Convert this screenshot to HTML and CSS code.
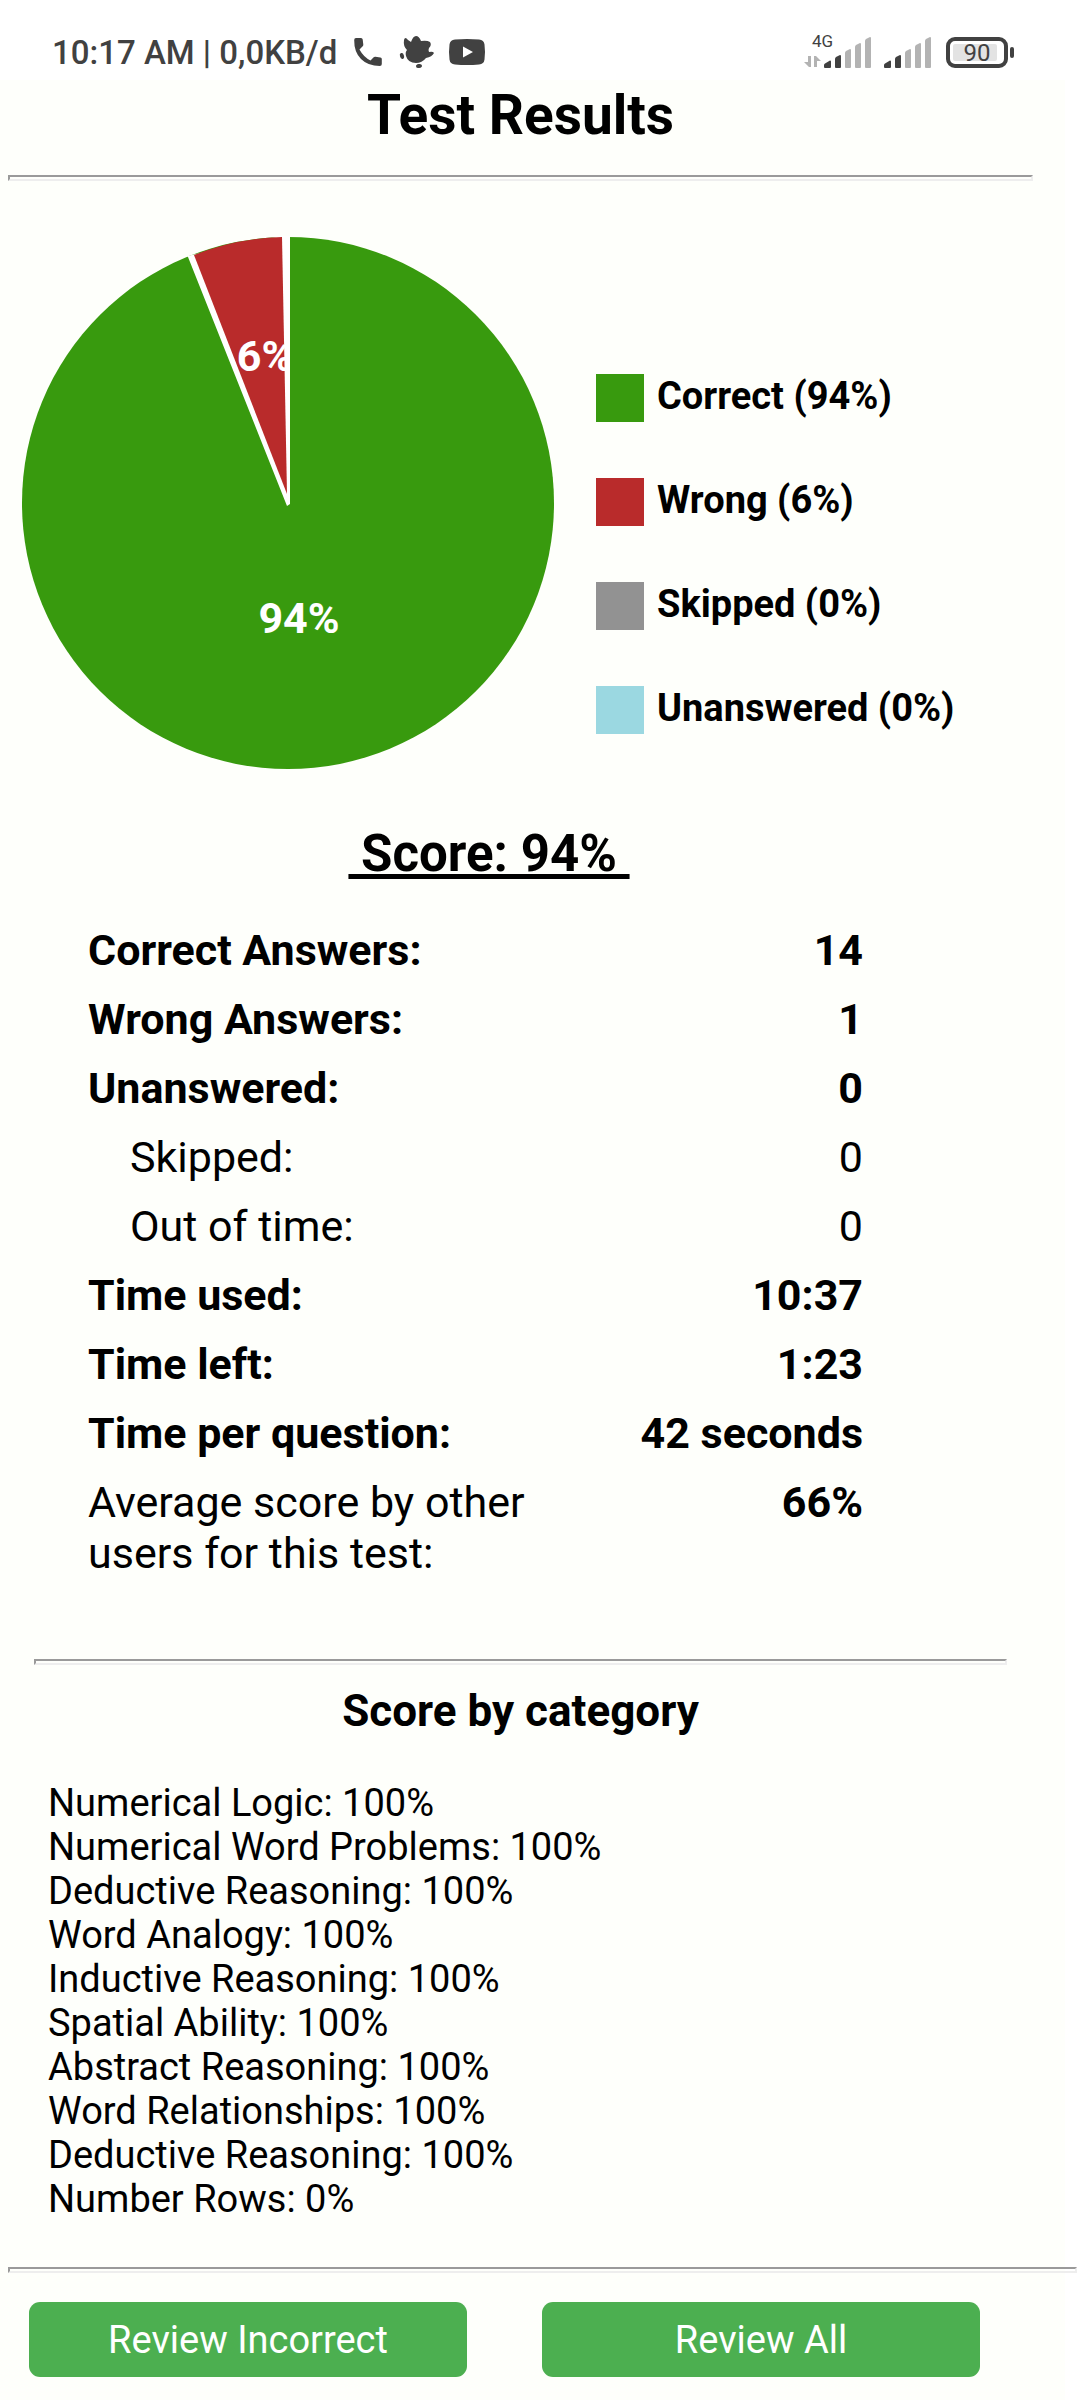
FILE: index.html
```html
<!DOCTYPE html>
<html lang="en">
<head>
<meta charset="utf-8">
<meta name="viewport" content="width=device-width, initial-scale=1">
<title>Test Results</title>
<link rel="stylesheet" href="styles.css">
</head>
<body>
<header class="status">
  <span class="status-text">10:17 AM | 0,0KB/d</span>
  <svg class="icon-phone" width="28" height="28" viewBox="0 0 28 28" aria-hidden="true"><path d="M2 0h5q1.500 0 1.700 1.500l.6 5q.1 1-.6 1.700L5.500 11.500q4 7.500 11 11l3.200-3.200q.7-.7 1.700-.5l5 .6q1.400.3 1.400 1.600v5q0 2-2 2Q14 28 7 21T.2 2Q.2 0 2 0z"/></svg>
  <svg class="icon-blob" width="34" height="34" viewBox="0 0 34 34" aria-hidden="true"><path d="M4 4q1-4 4 0l3 2q2-6 5-6t5 5q6-1 9 1 2 3-1 6-1 2 0 4 4-1 5 1-2 4-8 5-4 5-10 5-8 0-10-7-1-4 1-6-4-4-3-10z"/><ellipse cx="2" cy="20" rx="2" ry="3" transform="rotate(-15 2 20)"/><ellipse cx="19" cy="30" rx="3" ry="2" transform="rotate(-10 19 30)"/></svg>
  <svg class="icon-video" width="36" height="26" viewBox="0 0 36 26" aria-hidden="true"><path fill-rule="evenodd" d="M6 .5Q18-.5 30 .5q5 .5 5.500 5 1 7.500 0 15-.5 4.500-5.500 5-12 1-24 0-5-.5-5.500-5-1-7.500 0-15Q1 1 6 .5zM14 7.500v11l10-5.500z"/></svg>
  <svg class="icon-signal" width="68" height="35" viewBox="0 0 68 35" aria-hidden="true">
    <text x="8" y="13" class="net">4G</text>
    <path class="dim" d="M4 22h3v11H5L0 28h4zM10 33h3v-6h4l-5-5h-2z"/>
    <path d="M20 31q0-1 1-1.500l5-3q1 0 1 1V33q0 1-1 1h-5q-1 0-1-1z"/>
    <path d="M31 25q0-1 1-2l4-2q1 0 1 1v11q0 1-1 1h-4q-1 0-1-1z"/>
    <path class="dim" d="M41 19q0-1 1-2l4-2q1 0 1 1v17q0 1-1 1h-4q-1 0-1-1zM51 13q0-1 1-2l4-2q1 0 1 1v23q0 1-1 1h-4q-1 0-1-1zM61 7q0-1 1-2l4-2q1 0 1 1v29q0 1-1 1h-4q-1 0-1-1z"/>
  </svg>
  <svg class="icon-signal" width="48" height="35" viewBox="20 0 48 35" aria-hidden="true">
    <path d="M20 31q0-1 1-1.500l5-3q1 0 1 1V33q0 1-1 1h-5q-1 0-1-1z"/>
    <path d="M31 25q0-1 1-2l4-2q1 0 1 1v11q0 1-1 1h-4q-1 0-1-1z"/>
    <path class="dim" d="M41 19q0-1 1-2l4-2q1 0 1 1v17q0 1-1 1h-4q-1 0-1-1zM51 13q0-1 1-2l4-2q1 0 1 1v23q0 1-1 1h-4q-1 0-1-1zM61 7q0-1 1-2l4-2q1 0 1 1v29q0 1-1 1h-4q-1 0-1-1z"/>
  </svg>
  <svg class="icon-battery" width="68" height="31" viewBox="0 0 68 31" role="img" aria-label="Battery 90%">
    <rect x="2" y="2" width="58" height="27" rx="7" fill="none" stroke="#414141" stroke-width="4"/>
    <rect x="7" y="7" width="44" height="17" rx="2" fill="#e3e3e3"/>
    <rect x="64" y="10" width="4" height="11" rx="2"/>
    <text x="31" y="24" text-anchor="middle" class="level">90</text>
  </svg>
</header>
<main class="page">
  <h1>Test Results</h1>
  <hr>
  <section class="chart">
    <svg class="pie" viewBox="0 0 534 534" role="img" aria-label="Correct 94%, wrong 6%">
      <circle cx="267" cy="267" r="266" fill="#389a0e"/>
      <path d="M269 268L269 0L260 0L166 20L167 21L266 270z" fill="#fff"/>
      <path d="M266 258L173 19Q215 2 261 1z" fill="#b92b2b"/>
      <text x="244" y="135" text-anchor="middle">6%</text>
      <path d="M269 90h24v60h-24z" fill="#389a0e"/>
      <text x="278" y="397" text-anchor="middle">94%</text>
    </svg>
    <ul class="legend">
      <li><span class="swatch correct"></span>Correct (94%)</li>
      <li><span class="swatch wrong"></span>Wrong (6%)</li>
      <li><span class="swatch skipped"></span>Skipped (0%)</li>
      <li><span class="swatch unanswered"></span>Unanswered (0%)</li>
    </ul>
  </section>
  <h2 class="score">&nbsp;Score: 94%&nbsp;</h2>
  <table class="stats">
    <tr><th scope="row">Correct Answers:</th><td>14</td></tr>
    <tr><th scope="row">Wrong Answers:</th><td>1</td></tr>
    <tr><th scope="row">Unanswered:</th><td>0</td></tr>
    <tr class="sub"><th scope="row">Skipped:</th><td>0</td></tr>
    <tr class="sub"><th scope="row">Out of time:</th><td>0</td></tr>
    <tr><th scope="row">Time used:</th><td>10:37</td></tr>
    <tr><th scope="row">Time left:</th><td>1:23</td></tr>
    <tr><th scope="row">Time per question:</th><td>42 seconds</td></tr>
    <tr class="average"><th scope="row">Average score by other users for this test:</th><td>66%</td></tr>
  </table>
  <section class="categories">
    <hr>
    <h3>Score by category</h3>
    <ul>
      <li>Numerical Logic: 100%</li>
      <li>Numerical Word Problems: 100%</li>
      <li>Deductive Reasoning: 100%</li>
      <li>Word Analogy: 100%</li>
      <li>Inductive Reasoning: 100%</li>
      <li>Spatial Ability: 100%</li>
      <li>Abstract Reasoning: 100%</li>
      <li>Word Relationships: 100%</li>
      <li>Deductive Reasoning: 100%</li>
      <li>Number Rows: 0%</li>
    </ul>
  </section>
</main>
<footer class="actions">
  <hr>
  <div class="buttons">
    <button type="button">Review Incorrect</button>
    <button type="button">Review All</button>
  </div>
</footer>
</body>
</html>
```

FILE: styles.css
```css
* { box-sizing: border-box; }

body {
  margin: 0;
  background: #fff;
  color: #000;
  font-family: Roboto, "Liberation Sans", sans-serif;
}

h1, h2, h3, ul { margin: 0; padding: 0; }
ul { list-style: none; }

hr {
  margin: 0;
  height: 6px;
  border: 2px solid;
  border-color: #9a9a9a #eee #eee #9a9a9a;
}

.status {
  display: flex;
  align-items: flex-start;
  height: 80px;
  padding: 34px 66px 0 52px;
  color: #414141;
  fill: #414141;
}
.status-text {
  font-size: 33px;
  font-weight: 500;
  line-height: 38px;
}
.status svg { flex: none; overflow: visible; }
.icon-phone { margin: 4px 0 0 17px; }
.icon-blob { margin: 2px 0 0 18px; }
.icon-video { margin: 5px auto 0 15px; }
.icon-signal { margin-right: 12px; }
.icon-battery { margin: 3px 0 0 2px; }
.dim { fill: #b3b3b3; }
.net { font-size: 17px; }
.level { font-size: 24px; }

.page, .actions {
  margin-right: 15px;
  background: #fefffb;
}
.page { padding: 0 32px 0 8px; }

h1 {
  padding: 3px 0 28px;
  font-size: 55px;
  line-height: 64px;
  text-align: center;
}

.chart {
  display: flex;
  align-items: flex-start;
  padding-top: 55px;
}
.pie {
  flex: none;
  width: 53%;
  max-width: 534px;
  margin-left: 13px;
}
.pie text {
  fill: #fff;
  font-size: 43px;
  font-weight: 700;
}
.legend {
  display: grid;
  gap: 56px;
  padding: 138px 0 0 41px;
  font-size: 38px;
  font-weight: 700;
  line-height: 44px;
}
.legend li { display: flex; gap: 13px; }
.swatch { width: 48px; height: 48px; }
.correct { background: #389a0e; }
.wrong { background: #b92b2b; }
.skipped { background: #929292; }
.unanswered { background: #9bd8e1; }

.score {
  margin: 54px 63px 0 0;
  font-size: 51px;
  line-height: 60px;
  text-align: center;
  text-decoration: underline;
}

.stats {
  width: calc(100% - 250px);
  margin: 32px 0 0 80px;
  border-spacing: 0;
  font-size: 43px;
  line-height: 51px;
}
.stats th, .stats td { padding: 9px 0; vertical-align: top; }
.stats th { width: 60%; text-align: left; }
.stats td { font-weight: 700; text-align: right; }
.stats .sub th, .stats .sub td, .stats .average th { font-weight: 400; }
.stats .sub th { padding-left: 42px; }

.categories { padding: 71px 26px 0; }
h3 {
  padding: 18px 0 22px;
  font-size: 44px;
  line-height: 56px;
  text-align: center;
}
.categories ul {
  padding: 20px 14px 0;
  font-size: 38px;
  line-height: 44px;
}

.actions { padding: 46px 0 23px 8px; }
.actions hr { margin-right: -12px; }
.buttons {
  display: grid;
  grid-template-columns: 1fr 1fr;
  gap: 75px;
  padding: 29px 85px 0 21px;
}
button {
  height: 75px;
  border: 0;
  border-radius: 11px;
  background: #4caf50;
  color: #fff;
  font: 400 38px Roboto, "Liberation Sans", sans-serif;
}
```
